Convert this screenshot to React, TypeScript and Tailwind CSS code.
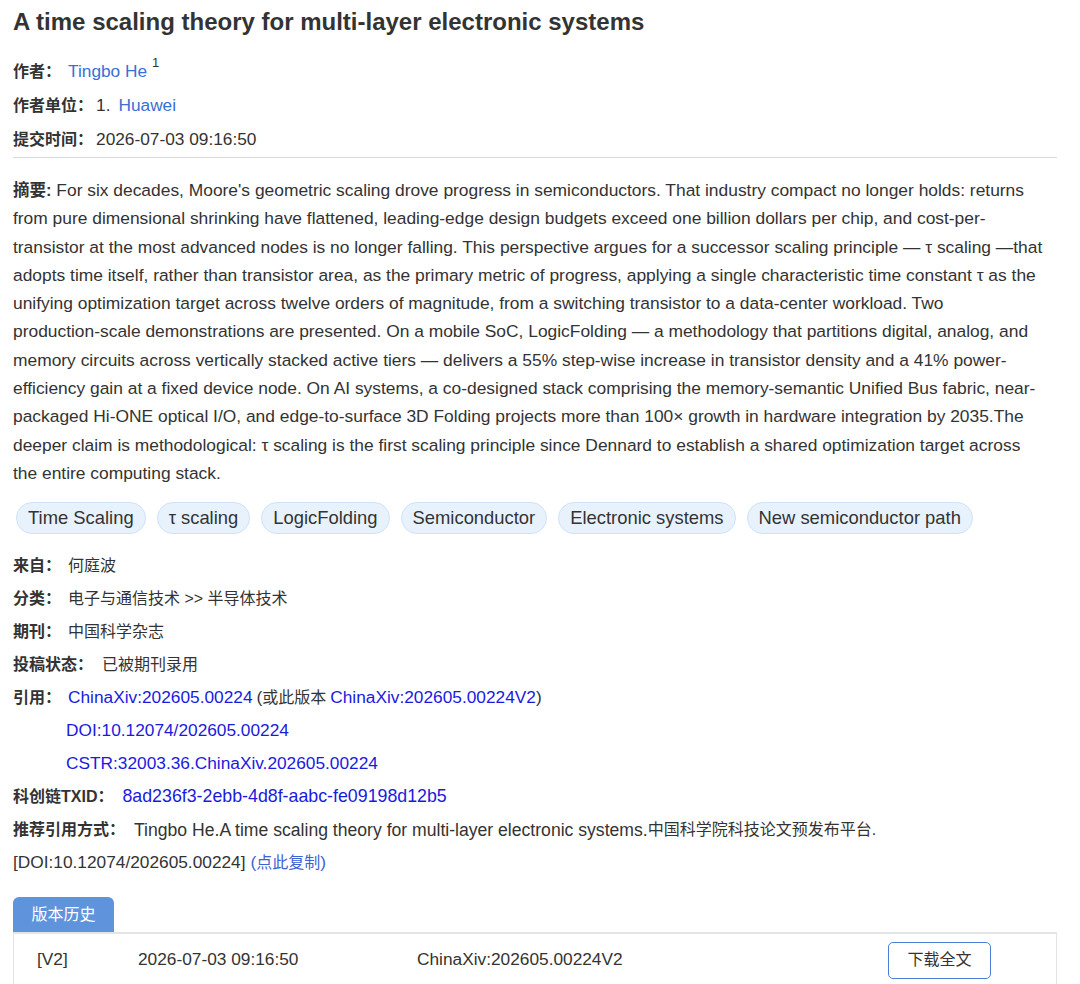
const abstractLines = [
  "from pure dimensional shrinking have flattened, leading-edge design budgets exceed one billion dollars per chip, and cost-per-",
  "transistor at the most advanced nodes is no longer falling. This perspective argues for a successor scaling principle — τ scaling —that",
  "adopts time itself, rather than transistor area, as the primary metric of progress, applying a single characteristic time constant τ as the",
  "unifying optimization target across twelve orders of magnitude, from a switching transistor to a data-center workload. Two",
  "production-scale demonstrations are presented. On a mobile SoC, LogicFolding — a methodology that partitions digital, analog, and",
  "memory circuits across vertically stacked active tiers — delivers a 55% step-wise increase in transistor density and a 41% power-",
  "efficiency gain at a fixed device node. On AI systems, a co-designed stack comprising the memory-semantic Unified Bus fabric, near-",
  "packaged Hi-ONE optical I/O, and edge-to-surface 3D Folding projects more than 100× growth in hardware integration by 2035.The",
  "deeper claim is methodological: τ scaling is the first scaling principle since Dennard to establish a shared optimization target across",
  "the entire computing stack.",
];

const tags = ["Time Scaling", "τ scaling", "LogicFolding", "Semiconductor", "Electronic systems", "New semiconductor path"];

// CJK glyphs are narrower than the Latin ones relative to the original, so they get their own size
function Zh({ children, className = "" }: { children: React.ReactNode; className?: string }) {
  return <span className={`text-[16px] ${className}`}>{children}</span>;
}

function Row({ label, children }: { label: string; children: React.ReactNode }) {
  return (
    <div className="flex items-center h-[33px] whitespace-nowrap">
      <Zh className="font-semibold">{label}</Zh>
      {children}
    </div>
  );
}

export default function App() {
  return (
    <div
      className="w-[1080px] h-[984px] overflow-hidden bg-white text-[#333] text-[17.3px] pl-[13px] pr-[23px]"
      style={{ fontFamily: '"Liberation Sans", "Noto Sans CJK SC", sans-serif' }}
    >
      <h1 className="text-[24px] leading-[44px] font-semibold text-[#333] whitespace-nowrap">
        A time scaling theory for multi-layer electronic systems
      </h1>

      <div className="mt-[11px]">
        <div className="flex items-center h-[34px]">
          <Zh className="font-semibold">作者：</Zh>
          <span className="ml-[7px] text-[#3b6fd6]">Tingbo He</span>
          <sup className="ml-[5px] text-[13px] -mt-[6px]">1</sup>
        </div>
        <div className="flex items-center h-[34px]">
          <Zh className="font-semibold">作者单位：</Zh>
          <span className="ml-[3px]">1.</span>
          <span className="ml-[8px] text-[#3b6fd6]">Huawei</span>
        </div>
        <div className="flex items-center h-[34px]">
          <Zh className="font-semibold">提交时间：</Zh>
          <span className="ml-[3px]">2026-07-03 09:16:50</span>
        </div>
      </div>

      <div className="h-px bg-[#d9d9d9]" />

      <div className="mt-[18px] leading-[28.3px] text-[17.4px]">
        <div className="whitespace-nowrap">
          <span className="font-semibold text-[16.5px]">摘要:</span> For six decades, Moore's geometric scaling drove progress in semiconductors. That industry compact no longer holds: returns
        </div>
        {abstractLines.map((l, i) => (
          <div key={i} className="whitespace-nowrap">
            {l}
          </div>
        ))}
      </div>

      <div className="mt-[15px] ml-[3px] flex gap-[11px]">
        {tags.map((t) => (
          <span
            key={t}
            className="h-[32px] px-[11px] flex items-center rounded-full bg-[#e8f2fd] border border-[#cfe2f8] text-[18.4px] text-[#333] whitespace-nowrap"
          >
            {t}
          </span>
        ))}
      </div>

      <div className="mt-[15px]">
        <Row label="来自：">
          <Zh className="ml-[7px]">何庭波</Zh>
        </Row>
        <Row label="分类：">
          <Zh className="ml-[7px]">电子与通信技术 &gt;&gt; 半导体技术</Zh>
        </Row>
        <Row label="期刊：">
          <Zh className="ml-[7px]">中国科学杂志</Zh>
        </Row>
        <Row label="投稿状态：">
          <Zh className="ml-[9px]">已被期刊录用</Zh>
        </Row>
        <Row label="引用：">
          <span className="ml-[7px] text-[#1a1adf]">ChinaXiv:202605.00224</span>
          <span className="ml-[4px]">(</span>
          <Zh>或此版本</Zh>
          <span className="ml-[4px] text-[#1a1adf]">ChinaXiv:202605.00224V2</span>
          <span>)</span>
        </Row>
        <div className="flex items-center h-[33px] pl-[53px] text-[#1a1adf]">DOI:10.12074/202605.00224</div>
        <div className="flex items-center h-[33px] pl-[53px] text-[#1a1adf]">CSTR:32003.36.ChinaXiv.202605.00224</div>
        <Row label="科创链TXID：">
          <span className="ml-[9px] text-[#1a1adf] text-[17.8px]">8ad236f3-2ebb-4d8f-aabc-fe09198d12b5</span>
        </Row>
        <Row label="推荐引用方式：">
          <span className="ml-[9px] text-[17.6px]">Tingbo He.A time scaling theory for multi-layer electronic systems.</span>
          <Zh>中国科学院科技论文预发布平台.</Zh>
        </Row>
        <div className="flex items-center h-[33px] whitespace-nowrap">
          <span>[DOI:10.12074/202605.00224]</span>
          <span className="ml-[5px] text-[#3d62d4]">
            (<Zh>点此复制</Zh>)
          </span>
        </div>
      </div>

      <div className="mt-[18px]">
        <div className="w-[101px] h-[35px] rounded-t-[6px] bg-[#5f94dd] text-white flex items-center justify-center">
          <Zh>版本历史</Zh>
        </div>
        <div className="border-t-2 border-x border-[#e4e4e4] h-[54px] flex items-center whitespace-nowrap">
          <span className="ml-[23px] w-[101px]">[V2]</span>
          <span className="w-[279px]">2026-07-03 09:16:50</span>
          <span className="w-[471px]">ChinaXiv:202605.00224V2</span>
          <button className="w-[103px] h-[37px] border border-[#4a7fd8] rounded-[5px] bg-white text-[#333]">
            <Zh>下载全文</Zh>
          </button>
        </div>
      </div>
    </div>
  );
}
